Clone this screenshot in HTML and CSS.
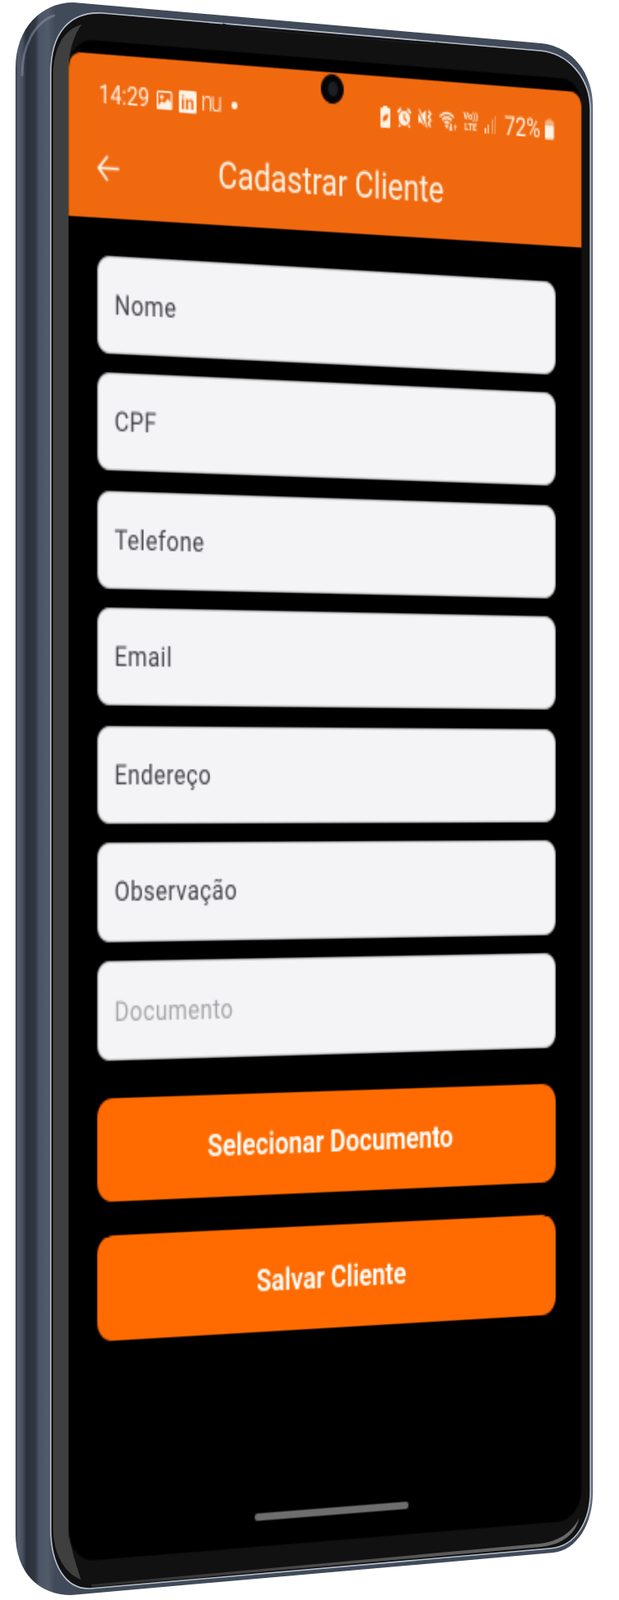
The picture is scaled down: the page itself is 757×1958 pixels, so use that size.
FILE: index.html
```html
<!DOCTYPE html>
<html lang="pt-BR">
<head>
<meta charset="utf-8">
<title>Cadastrar Cliente</title>
<link rel="stylesheet" href="styles.css">
</head>
<body>
<div class="phone">
  <svg class="body" viewBox="0 0 757 1958" width="757" height="1958" aria-hidden="true">
    <defs>
      <linearGradient id="frame" gradientUnits="userSpaceOnUse" x1="19" y1="0" x2="725" y2="0">
        <stop offset="0" stop-color="#3a4351"/>
        <stop offset=".005" stop-color="#535d6d"/>
        <stop offset=".012" stop-color="#465060"/>
        <stop offset=".019" stop-color="#2a303b"/>
        <stop offset=".034" stop-color="#313743"/>
        <stop offset=".041" stop-color="#4c5565"/>
        <stop offset=".056" stop-color="#515b6a"/>
        <stop offset=".068" stop-color="#414a59"/>
        <stop offset=".985" stop-color="#414a59"/>
        <stop offset="1" stop-color="#6a7280"/>
      </linearGradient>
      <linearGradient id="strip" gradientUnits="userSpaceOnUse" x1="110" y1="0" x2="700" y2="0">
        <stop offset="0" stop-color="#2c2c2c"/>
        <stop offset=".5" stop-color="#4c4c4c"/>
        <stop offset="1" stop-color="#6a6a6a"/>
      </linearGradient>
    </defs>
    <path class="outer" d="M19 83C19 35 50 3 90 3L662 53C700 57 725 90 725 130L725 1827C725 1865 705 1897 677 1900L87 1952C48 1952 19 1925 19 1877Z"/>
    <path class="shine" d="M27 92C27 56 42 28 66 19"/>
    <path class="glass" d="M62 90C62 40 85 14 125 16L660 62C695 65 722 95 722 135L722 1825C722 1860 705 1893 672 1895L110 1944C80 1945 62 1915 62 1870Z"/>
    <path class="slit" d="M272 29Q285 33 300 35L510 53Q522 54 535 52"/>
    <path class="side" d="M65 90C66 58 78 36 100 30C92 40 84 60 84 85L84 1860C84 1890 92 1910 99 1933C78 1925 65 1900 65 1870Z"/>
    <path class="foot" d="M112 1939L660 1889C682 1887 700 1875 708 1858C705 1875 690 1890 662 1893L112 1942Z"/>
  </svg>

  <main class="screen">
    <header class="appbar">
      <span class="camera"><span class="lens"></span></span>
      <div class="status">
        <div class="status-left">
          <span class="clock">14:29</span>
          <svg class="ico pic" viewBox="0 0 11 11"><rect width="11" height="11" rx="1.6" fill="#fff3e6"/><rect x="1.1" y="1.1" width="8.8" height="8.8" rx=".6" fill="#f0690f"/><circle cx="3.6" cy="3.6" r="1.3" fill="#fff3e6"/><path d="M1.1 8.2L3.8 5.8 5.4 7 7.8 4.2 9.9 6.4V9.9H1.1Z" fill="#fff3e6"/></svg>
          <span class="linkedin">in</span>
          <span class="nu">nu</span>
          <span class="dot"></span>
        </div>
        <div class="status-right">
          <svg class="ico saver" viewBox="0 0 7 12"><path d="M2 0H5V1H6Q7 1 7 2V11Q7 12 6 12H1Q0 12 0 11V2Q0 1 1 1H2Z" fill="#fff3e6"/><path d="M1.6 8.6C1.4 6 3.4 4.4 5.6 4.4 5.6 7 4 8.6 1.6 8.6Z" fill="#f0690f"/></svg>
          <svg class="ico alarm" viewBox="0 0 10 11"><circle cx="5" cy="6" r="4.1" fill="#fff3e6"/><path d="M5 3.4V6.2L7 7.4" fill="none" stroke="#f0690f" stroke-width="1"/><path d="M.3 3L2.6.6M9.7 3L7.4.6M2 9.6L1.2 10.8M8 9.6L8.8 10.8" fill="none" stroke="#fff3e6" stroke-width="1.4"/></svg>
          <svg class="ico mute" viewBox="0 0 10 11"><path d="M0 3.4H2.2L5.4.6V10.4L2.2 7.6H0Z" fill="#fff3e6"/><path d="M.2 1.2L5.6 10.4" stroke="#f0690f" stroke-width="1.1"/><path d="M.6.4L6.4 10.2" stroke="#fff3e6" stroke-width=".9"/><path d="M7.2.8L8.9 2.4 7.2 4.2 8.9 6 7.2 7.8 8.9 9.6" fill="none" stroke="#fff3e6" stroke-width="1.2"/></svg>
          <svg class="ico wifi" viewBox="0 0 13 11"><path d="M.5 3.6C3.4.6 7.6.6 10.5 3.6M2.2 5.3C4.2 3.3 6.8 3.3 8.8 5.3M3.9 7C4.9 6 6.1 6 7.1 7" fill="none" stroke="#fff3e6" stroke-width="1.3"/><circle cx="5.5" cy="8.6" r="1" fill="#fff3e6"/><path d="M8.4 7V10.6M7.4 9.6L8.4 10.8 9.4 9.6" fill="none" stroke="#fff3e6" stroke-width="1"/><path d="M11.6 10.6V8M10.8 8.9L11.6 7.8 12.4 8.9" fill="none" stroke="#ffd9b8" stroke-width=".7"/></svg>
          <span class="volte"><span>Vo))</span><span>LTE</span></span>
          <span class="signal"><i class="b1"></i><i class="b2"></i><i class="b3"></i><i class="b4"></i></span>
          <span class="pct">72%</span>
          <svg class="ico batt" viewBox="0 0 7 12"><path d="M2 0H5V1H6Q7 1 7 2V11Q7 12 6 12H1Q0 12 0 11V2Q0 1 1 1H2Z" fill="#f9b27c"/><path d="M0 4H7V11Q7 12 6 12H1Q0 12 0 11Z" fill="#fff3e6"/></svg>
        </div>
      </div>
      <div class="titlebar">
        <svg class="back" viewBox="0 0 15 15"><path d="M14.6 7.5H1M7 1L.9 7.5 7 14" fill="none" stroke="#fff3e6" stroke-width="1.5"/></svg>
        <h1 class="title">Cadastrar Cliente</h1>
        <span></span>
      </div>
    </header>

    <section class="form">
      <div class="fields">
        <div class="field">Nome</div>
        <div class="field">CPF</div>
        <div class="field">Telefone</div>
        <div class="field">Email</div>
        <div class="field">Endereço</div>
        <div class="field">Observação</div>
        <div class="field placeholder">Documento</div>
      </div>
      <div class="actions">
        <div class="btn">Selecionar Documento</div>
        <div class="btn">Salvar Cliente</div>
      </div>
    </section>

    <div class="homebar"></div>
  </main>
</div>
</body>
</html>
```

FILE: styles.css
```css
* { box-sizing: border-box; }
html, body { margin: 0; padding: 0; background: #fff; }
.phone { position: relative; width: 757px; height: 1958px; overflow: hidden; font-family: Roboto, "Liberation Sans", sans-serif; }

.body { position: absolute; left: 0; top: 0; display: block; }
.outer { fill: url(#frame); }
.shine { fill: none; stroke: #8b95a5; stroke-width: 3; stroke-linecap: round; opacity: .5; }
.glass { fill: #111; stroke: #b9c1cd; stroke-width: 1.6; }
.slit { fill: none; stroke: #1c2027; stroke-width: 1.2; }
.side { fill: #3f3f3f; }
.foot { fill: url(#strip); }

.screen {
  position: absolute; left: 0; top: 0;
  width: 360px; height: 807px;
  padding-top: 7px;
  display: flex; flex-direction: column;
  background: #000;
  border-radius: 16px 14px 17px 17px;
  overflow: hidden;
  filter: blur(.25px);
  transform-origin: 0 0;
  transform: matrix3d(1.85698,0.157217,0,0.000162183, 0,2.31125,0,0, 0,0,1,0, 84,46.82,0,1);
}

.appbar {
  position: relative;
  flex: none;
  height: 87px;
  padding-top: 11px;
  background: #f0690f;
  border-radius: 8px 8px 0 0;
  color: #fff3e6;
}
.camera {
  position: absolute; left: 172.4px; top: 1px;
  width: 16px; height: 16px;
  border-radius: 50%;
  background: #050507;
  display: flex; align-items: center; justify-content: center;
}
.lens { width: 7px; height: 8px; border-radius: 50%; background: #1d1d24; }

.status {
  height: 22px;
  padding: 0 20px 0 20px;
  display: flex; align-items: center; justify-content: space-between;
}
.status-left, .status-right { display: flex; align-items: center; }
.ico { display: block; flex: none; }
.clock { font-size: 13.7px; width: 34px; margin-right: 5.2px; line-height: 1; }
.pic { width: 10.5px; height: 10.5px; margin-right: 4.4px; }
.linkedin {
  width: 11.7px; height: 12px; margin-right: 3.3px;
  background: #fff3e6; color: #f0690f;
  border-radius: 1px;
  font: 700 10.5px/12.5px "Liberation Sans", sans-serif;
  text-align: center;
}
.nu { font-size: 14.5px; line-height: 1; width: 12.5px; margin-right: 8.4px; letter-spacing: -1.4px; font-weight: 300; }
.dot { width: 3.8px; height: 3.8px; border-radius: 50%; background: #fff3e6; }

.status-right { gap: 5px; }
.saver { width: 7px; height: 12px; }
.alarm { width: 10px; height: 11px; }
.mute { width: 10px; height: 11px; }
.wifi { width: 13px; height: 11px; }
.volte {
  width: 10px;
  display: flex; flex-direction: column; align-items: center;
  font-size: 5.6px; line-height: 5.6px; font-weight: 700;
}
.signal { width: 8.4px; height: 10px; display: flex; align-items: flex-end; justify-content: space-between; margin-right: 1px; }
.signal i { width: 1px; display: block; background: #fff3e6; }
.b1 { height: 2.5px; width: 1.2px !important; }
.b2 { height: 5px; opacity: .75; }
.b3 { height: 7.5px; opacity: .45; }
.b4 { height: 10px; opacity: .3; }
.pct { font-size: 14.3px; line-height: 1; width: 27px; margin-right: -1.8px; }
.batt { width: 6.6px; height: 12px; }

.titlebar {
  height: 54px;
  padding: 0 0 0 19px;
  display: grid;
  grid-template-columns: 1fr auto 1fr;
  align-items: center;
}
.back { width: 15px; height: 15px; display: block; }
.title { margin: 0; font-size: 20.7px; font-weight: 400; line-height: 1; position: relative; left: -9.5px; }

.form { flex: none; padding: 19.5px 19px 0 19px; }
.fields { display: flex; flex-direction: column; gap: 10.4px; }
.field {
  height: 52.2px;
  padding: 0 10.5px;
  display: flex; align-items: center;
  background: #f4f4f6;
  border: 1px solid #c4c4c6;
  border-radius: 8px;
  color: #46464c;
  font-size: 15px;
  letter-spacing: .4px;
}
.field.placeholder { height: 53.2px; color: #a6a6aa; }

.actions { margin-top: 19.4px; margin-left: -.5px; display: flex; flex-direction: column; gap: 18.6px; }
.btn {
  height: 55.2px;
  display: flex; align-items: center; justify-content: center;
  background: #ff6b00;
  border-radius: 10px;
  color: #fff;
  font-size: 17px;
  font-weight: 600;
}

.homebar {
  flex: none;
  margin: auto auto 14px;
  width: 108px; height: 4px;
  border-radius: 2px;
  background: #6e6e6e;
}
```
